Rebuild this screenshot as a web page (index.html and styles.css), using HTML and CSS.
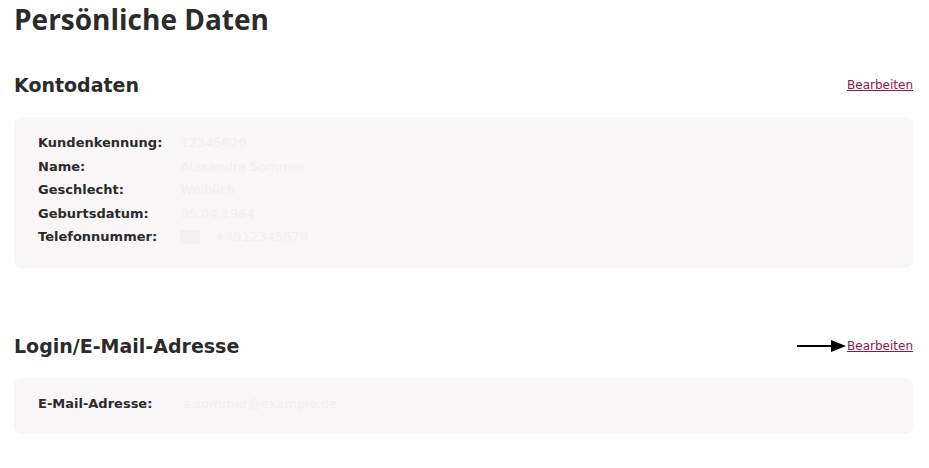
FILE: index.html
```html
<!DOCTYPE html>
<html lang="de">
<head>
<meta charset="utf-8">
<title>Persönliche Daten</title>
<link rel="stylesheet" href="styles.css">
</head>
<body>
<main class="page">
  <h1 class="page-title">Persönliche Daten</h1>

  <section class="section section-account">
    <div class="section-head">
      <h2 class="section-title">Kontodaten</h2>
      <div class="actions"><a class="edit-link" href="#">Bearbeiten</a></div>
    </div>
    <div class="card">
      <dl class="fields">
        <dt>Kundenkennung:</dt><dd>12345620</dd>
        <dt>Name:</dt><dd>Alexandra Sommer</dd>
        <dt>Geschlecht:</dt><dd>Weiblich</dd>
        <dt>Geburtsdatum:</dt><dd>05.04.1984</dd>
        <dt>Telefonnummer:</dt><dd><span class="flag"></span><span class="phone">+4912345678</span></dd>
      </dl>
    </div>
  </section>

  <section class="section section-login">
    <div class="section-head">
      <h2 class="section-title">Login/E-Mail-Adresse</h2>
      <div class="actions">
        <svg class="arrow" width="49" height="14" viewBox="0 0 49 14" aria-hidden="true">
          <line x1="0" y1="7" x2="36" y2="7" stroke="#000" stroke-width="2"/>
          <polygon points="34,1 49,7 34,13" fill="#000"/>
        </svg>
        <a class="edit-link" href="#">Bearbeiten</a>
      </div>
    </div>
    <div class="card">
      <dl class="fields fields-email">
        <dt>E-Mail-Adresse:</dt><dd>a.sommer@example.de</dd>
      </dl>
    </div>
  </section>
</main>
</body>
</html>
```

FILE: styles.css
```css
* { box-sizing: border-box; }

html, body {
  margin: 0;
  padding: 0;
  background: #ffffff;
}

body {
  font-family: "DejaVu Sans", "Noto Sans", sans-serif;
  color: #2b2b2b;
}

.page {
  padding: 0 16px 0 14px;
}

.page-title {
  margin: 0;
  font-family: "Open Sans", "DejaVu Sans", sans-serif;
  font-size: 28px;
  line-height: 38px;
  font-weight: 700;
  color: #2b2b2b;
}

.section-account {
  margin-top: 30px;
}

.section-login {
  margin-top: 61px;
}

.section-head {
  display: flex;
  align-items: center;
  justify-content: space-between;
  height: 34px;
  margin-bottom: 15px;
}

.section-title {
  margin: 0;
  font-size: 19px;
  line-height: 26px;
  font-weight: 600;
  color: #2b2b2b;
}

.actions {
  display: flex;
  align-items: center;
  gap: 1px;
}

.arrow {
  display: block;
}

.edit-link {
  font-size: 12px;
  line-height: 16px;
  color: #8c1840;
  text-decoration: underline;
  text-underline-offset: 1px;
}

.card {
  background: #f8f6f7;
  border-radius: 8px;
  padding: 14px 24px 19px;
}

.fields {
  margin: 0;
  display: grid;
  grid-template-columns: max-content 1fr;
  column-gap: 18px;
}

.fields-email {
  column-gap: 30px;
}

.fields dt {
  font-size: 13px;
  line-height: 23.5px;
  font-weight: 700;
  color: #2b2b2b;
}

.fields dd {
  margin: 0;
  font-size: 13px;
  line-height: 23.5px;
  color: #f1eef0;
  display: flex;
  align-items: center;
  gap: 14px;
}

.flag {
  display: inline-block;
  width: 20px;
  height: 14px;
  background: #f3f0f0;
}
```
